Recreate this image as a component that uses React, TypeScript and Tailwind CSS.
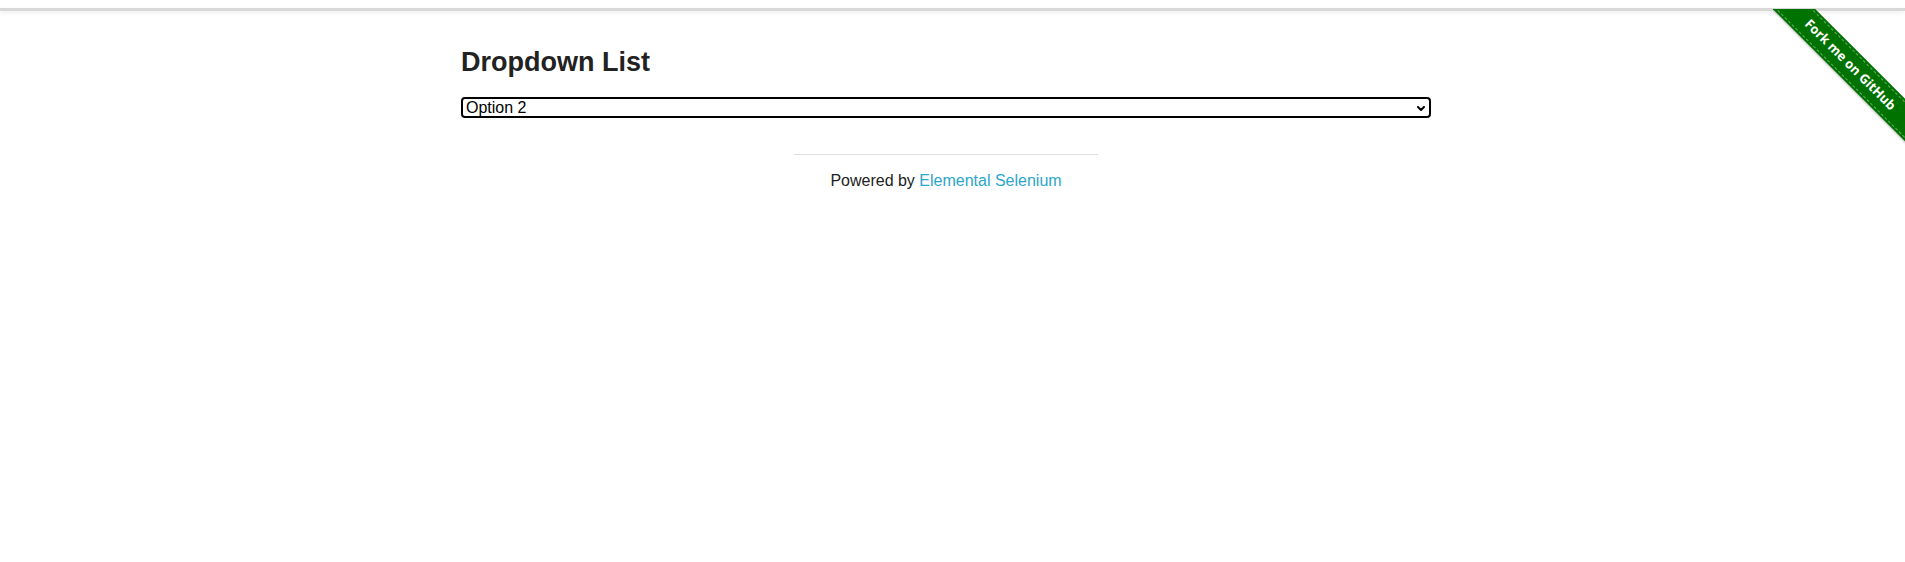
import { useState } from "react";

function GithubRibbon() {
  // diagonal corner ribbon, clipped to the top-right corner
  return (
    <div className="pointer-events-none absolute right-0 top-[9px] h-[141px] w-[132px] overflow-hidden">
      <div className="absolute left-[-33px] top-[41px] flex h-[30px] w-[220px] rotate-45 items-center justify-center bg-[#007200] shadow-[0_1px_2px_rgba(0,0,0,0.25)]">
        <div className="absolute inset-x-0 top-[2px] bottom-[2px] border-y border-dashed border-white/40" />
        <span className="relative font-['Open_Sans',sans-serif] text-[13px] font-bold text-white">
          Fork me on GitHub
        </span>
      </div>
    </div>
  );
}

export default function App() {
  const [value, setValue] = useState("2");

  return (
    <div className="relative min-h-[562px] bg-white font-['Liberation_Sans',Arial,sans-serif] text-[#222]">
      <div className="h-[8px]" />
      <div className="h-[3px] bg-[#d8d8d8] shadow-[0_2px_4px_rgba(0,0,0,0.08)]" />

      <GithubRibbon />

      <div className="w-[1892px]">
        <div className="mx-auto w-[970px] pt-[35px]">
          <h3 className="mb-[19px] text-[27px] font-bold leading-[32px] text-[#222]">Dropdown List</h3>
          <div className="relative">
            <select
              id="dropdown"
              value={value}
              onChange={e => setValue(e.target.value)}
              className="block h-[21px] w-[970px] appearance-none rounded-[4px] border-2 border-black bg-white pl-[3px] text-[16px] leading-[17px] text-black outline-none"
            >
              <option value="" disabled>Please select an option</option>
              <option value="1">Option 1</option>
              <option value="2">Option 2</option>
            </select>
            <svg
              className="pointer-events-none absolute right-[6px] top-[9px]"
              width="8"
              height="5"
              viewBox="0 0 8 5"
              fill="none"
            >
              <polyline points="1,1 4,4 7,1" stroke="black" strokeWidth="2" strokeLinecap="round" strokeLinejoin="round" />
            </svg>
          </div>
        </div>

        <div className="mx-auto mt-[36px] w-[304px]">
          <hr className="border-0 border-t border-[#dddddd]" />
          <div className="mt-[14px] text-center text-[16px] leading-[24px]">
            Powered by{" "}
            <a href="#" className="text-[#2ba6cb] no-underline">
              Elemental Selenium
            </a>
          </div>
        </div>
      </div>
    </div>
  );
}
